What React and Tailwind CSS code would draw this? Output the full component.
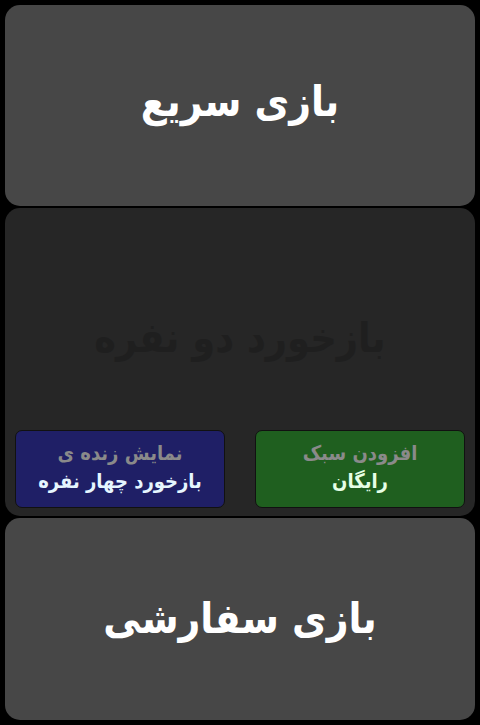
import React from 'react'

const font = { fontFamily: '"DejaVu Sans Condensed", "DejaVu Sans", sans-serif' }

export default function App() {
  return (
    <div dir='rtl' className='w-[480px] h-[725px] bg-black p-[5px] flex flex-col gap-[2px]' style={font}>
      <div className='h-[201px] rounded-[15px] bg-[#474747] flex items-center justify-center pb-[8px]'>
        <h1 className='text-[42px] font-bold text-white leading-none'>بازی سریع</h1>
      </div>

      <div className='h-[308px] rounded-[15px] bg-[#262626] flex flex-col px-[10px] pb-[8px]'>
        <div className='flex-1 flex items-center justify-center pt-[38px]'>
          <h1 className='text-[41px] font-bold text-[#1f1f1f] leading-none'>بازخورد دو نفره</h1>
        </div>
        <div className='flex gap-[30px]'>
          <div className='flex-1 h-[78px] rounded-[7px] border border-[#111] bg-[#1f5f1f] flex flex-col items-center justify-center gap-[3px] pb-[4px]'>
            <span className='text-[20px] font-bold text-[#8a8a8a] leading-tight'>افزودن سبک</span>
            <span className='text-[20px] font-bold text-[#e6ffe6] leading-tight'>رایگان</span>
          </div>
          <div className='flex-1 h-[78px] rounded-[7px] border border-[#111] bg-[#1f1f66] flex flex-col items-center justify-center gap-[3px] pb-[4px]'>
            <span className='text-[20px] font-bold text-[#8a8a8a] leading-tight'>نمایش زنده ی</span>
            <span className='text-[20px] font-bold text-[#e6f6ff] leading-tight'>بازخورد چهار نفره</span>
          </div>
        </div>
      </div>

      <div className='h-[202px] rounded-[15px] bg-[#474747] flex items-center justify-center'>
        <h1 className='text-[42px] font-bold text-white leading-none'>بازی سفارشی</h1>
      </div>
    </div>
  )
}
